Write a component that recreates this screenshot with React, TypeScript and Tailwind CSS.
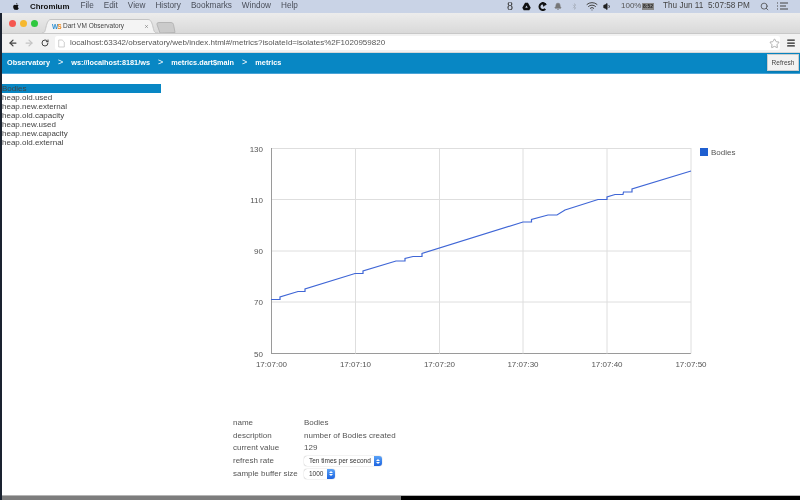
import { Bell, Bluetooth, Search, Star, Menu, Volume1, Wifi, X, ArrowLeft, ArrowRight, RotateCw } from "lucide-react";

const FONT = "font-['Liberation_Sans',Arial,sans-serif]";

const METRICS = ["Bodies", "heap.old.used", "heap.new.external", "heap.old.capacity", "heap.new.used", "heap.new.capacity", "heap.old.external"];
const MAC_MENU = ["File", "Edit", "View", "History", "Bookmarks", "Window", "Help"];
const CRUMBS = ["Observatory", "ws://localhost:8181/ws", "metrics.dart$main", "metrics"];

const LINE =
  "271,299.5 280,299.5 280,297 298,291.5 305,291.5 305,289 355,273.5 363,273.5 363,271 396,261 405,261 405,258.5 413,256.5 422,256.5 422,253.5 523,222 531.5,222 531.5,219.5 548,215 557,215 565,210 598,199.5 607,199.5 607,197 615,194.5 623,194.5 623.5,192 632,192 632,189 691,171";

const Y_TICKS = [
  { label: "130", y: 148.5 },
  { label: "110", y: 199.5 },
  { label: "90", y: 251 },
  { label: "70", y: 302 },
  { label: "50", y: 353.5 },
];
const X_TICKS = [
  { label: "17:07:00", x: 271.5 },
  { label: "17:07:10", x: 355.5 },
  { label: "17:07:20", x: 439.5 },
  { label: "17:07:30", x: 523 },
  { label: "17:07:40", x: 607 },
  { label: "17:07:50", x: 691 },
];

function MenuBar() {
  return (
    <div className="h-[13px] bg-[#c9d3e6] flex items-center text-[8.2px] text-[#4a4f5a] pl-[12px] pr-[12px] shrink-0">
      <svg viewBox="0 0 24 24" className="w-[8px] h-[9px] mr-[10px] fill-[#111]">
        <path d="M17.5 12.6c0-2.6 2.1-3.8 2.2-3.9-1.2-1.8-3.1-2-3.7-2-1.6-.2-3.1.9-3.9.9s-2.1-.9-3.4-.9c-1.7 0-3.4 1-4.3 2.6-1.8 3.2-.5 7.9 1.3 10.5.9 1.3 1.9 2.7 3.3 2.6 1.3-.1 1.8-.8 3.4-.8s2 .8 3.4.8 2.3-1.3 3.2-2.6c1-1.5 1.4-2.9 1.4-3-.1 0-2.9-1.1-2.9-4.2zM14.9 4.8c.7-.9 1.2-2.1 1.1-3.3-1 0-2.3.7-3 1.6-.7.8-1.2 2-1.1 3.2 1.2.1 2.3-.6 3-1.5z" />
      </svg>
      <span className="font-bold text-[7.9px] text-[#111] w-[50.5px]">Chromium</span>
      <div className="flex gap-[10px]">
        {MAC_MENU.map((m) => (
          <span key={m}>{m}</span>
        ))}
      </div>
      <div className="ml-auto flex items-center text-[#444]">
        <span className="font-['Liberation_Serif',serif] text-[12px] w-[7px] leading-none text-[#333]">8</span>
        <svg viewBox="0 0 16 16" className="w-[9px] h-[9px] ml-[8px] fill-[#111]">
          <path d="M5.5 1.5h5L15.5 10l-2.5 4.5h-10L.5 10z" />
          <path d="M8 6L5.8 10h4.4z" fill="#c9d3e6" />
        </svg>
        <svg viewBox="0 0 16 16" className="w-[9px] h-[9px] ml-[7px] fill-none stroke-[#111] stroke-[3.5]">
          <path d="M14 5.5a6 6 0 1 0-1 7" />
          <path d="M9 2l3 1.5-1.5 2z" />
        </svg>
        <Bell className="w-[8px] h-[9px] ml-[7px] fill-[#777] text-[#777]" />
        <Bluetooth className="w-[7px] h-[9px] ml-[9px] text-[#a4aab6]" />
        <Wifi className="w-[12px] h-[12px] -my-[1px] ml-[8px] text-[#444]" />
        <Volume1 className="w-[9px] h-[9px] ml-[5px] fill-[#222] text-[#222]" />
        <span className="ml-[9px] w-[18px] text-[8px] text-[#555]">100%</span>
        <span className="ml-[3px] w-[12px] h-[7px] bg-[#888] text-[5px] leading-[7px] text-center text-[#222] font-bold">8:52</span>
        <span className="ml-[9px] w-[40px] whitespace-nowrap">Thu Jun 11</span>
        <span className="ml-[5px] w-[41px] whitespace-nowrap">5:07:58 PM</span>
        <Search className="w-[9px] h-[9px] ml-[11px] text-[#444]" />
        <svg viewBox="0 0 11 8" className="w-[11px] h-[8px] ml-[8px] stroke-[#444]">
          <path d="M0 1h1M3 1h8M0 4h1M3 4h6M0 7h1M3 7h8" />
        </svg>
      </div>
    </div>
  );
}

function BrowserChrome() {
  return (
    <div className="shrink-0">
      <div className="h-[20px] bg-gradient-to-b from-[#ececec] to-[#d9d9d9] flex items-end pl-[7px]">
        <div className="flex gap-[4px] self-center w-[33px]">
          <span className="w-[7px] h-[7px] shrink-0 rounded-full bg-[#f5564f]" />
          <span className="w-[7px] h-[7px] shrink-0 rounded-full bg-[#f6b82e]" />
          <span className="w-[7px] h-[7px] shrink-0 rounded-full bg-[#2fc83f]" />
        </div>
        <div className="relative w-[116px] h-[14px] flex items-center text-[#444] pl-[10px] pr-[9px]">
          <svg viewBox="0 0 116 14" className="absolute inset-0 w-[116px] h-[14px] fill-[#f4f4f4] stroke-[#c4c4c4]">
            <path d="M0 14c3 0 3-2 4-6s2-7.500 5-7.500h97c3 0 4 3.500 5 7.500s1 6 5 6" />
          </svg>
          <span className="relative w-[9px] text-[6.5px] leading-[7px] font-bold whitespace-nowrap tracking-[-1px]">
            <span className="text-[#2d8fd0]">W</span>
            <span className="text-[#ee8a22]">S</span>
          </span>
          <span className="relative ml-[2px] text-[6.5px]">Dart VM Observatory</span>
          <X className="relative w-[5px] h-[5px] ml-auto text-[#555]" />
        </div>
        <svg viewBox="0 0 20 11" className="w-[20px] h-[11px] -ml-[2px] fill-[#cbcbcb] stroke-[#b5b5b5]">
          <path d="M4 11L1 2.500Q.5.500 3 .500h12q2 0 2.500 2L19 10.500z" />
        </svg>
      </div>
      <div className="h-[19px] bg-[#f2f2f2] border-t border-[#c8c8c8] flex items-center pl-[6px] pr-[4px]">
        <ArrowLeft className="w-[10px] h-[10px] text-[#444] stroke-[3]" />
        <ArrowRight className="w-[10px] h-[10px] text-[#c4c4c4] ml-[6px] stroke-[3]" />
        <RotateCw className="w-[8px] h-[8px] text-[#444] ml-[7px] stroke-[3]" />
        <div className="ml-[6px] w-[725px] h-[14px] bg-white flex items-center rounded-[2px] text-[8px] text-[#555] pl-[3px]">
          <svg viewBox="0 0 10 12" className="w-[7px] h-[9px] mr-[5px] fill-white stroke-[#bbb]">
            <path d="M1 1h5l3 3v7H1z" />
          </svg>
          <span>localhost:63342/observatory/web/index.html#/metrics?isolateId=isolates%2F1020959820</span>
          <Star className="w-[11px] h-[11px] ml-auto text-[#aaa]" />
        </div>
        <Menu className="w-[10px] h-[10px] ml-[6px] text-[#222] stroke-[3]" />
      </div>
      <div className="h-px bg-[#d8d8d8]" />
    </div>
  );
}

function Chart() {
  return (
    <svg viewBox="0 0 800 310" width={800} height={310} className="block">
      <g transform="translate(0 -130)">
        {Y_TICKS.map((t) => (
          <g key={t.label}>
            <line x1={271} x2={691} y1={t.y} y2={t.y} stroke={t.y > 350 ? "#9a9a9a" : "#dedede"} strokeWidth={1} />
            <text x={263} y={t.y + 3} textAnchor="end" fontSize={8} fill="#555">
              {t.label}
            </text>
          </g>
        ))}
        {X_TICKS.map((t, i) => (
          <g key={t.label}>
            <line x1={t.x} x2={t.x} y1={148} y2={353.5} stroke={i === 0 ? "#9a9a9a" : "#dedede"} strokeWidth={1} />
            <text x={t.x} y={366.5} textAnchor="middle" fontSize={8} fill="#555">
              {t.label}
            </text>
          </g>
        ))}
        <polyline points={LINE} fill="none" stroke="#3f66d6" strokeWidth={1.2} />
        <rect x={700} y={148} width={8} height={8} fill="#1f5fd0" />
        <text x={711} y={155} fontSize={8} fill="#555">
          Bodies
        </text>
      </g>
    </svg>
  );
}

function Stepper() {
  return (
    <span className="w-[8px] shrink-0 self-stretch bg-gradient-to-b from-[#5aa2f7] to-[#1d63e0] rounded-r-[3px] flex flex-col items-center justify-center gap-[1px]">
      <span className="w-0 h-0 border-x-[2px] border-x-transparent border-b-[2px] border-b-white" />
      <span className="w-0 h-0 border-x-[2px] border-x-transparent border-t-[2px] border-t-white" />
    </span>
  );
}

function Select({ value, width }: { value: string; width: string }) {
  return (
    <div className={`h-[10px] ${width} bg-white rounded-[3px] shadow-[0_0_1px_#888] flex items-center text-[6.5px] text-[#333] pl-[5px]`}>
      <span className="flex-1 whitespace-nowrap">{value}</span>
      <Stepper />
    </div>
  );
}

export default function App() {
  return (
    <div className={`w-[800px] h-[500px] overflow-hidden flex flex-col bg-white blur-[0.4px] ${FONT}`}>
      <MenuBar />
      <div className="flex-1 flex flex-col border-l-2 border-[#1a2230] min-h-0">
        <BrowserChrome />
        <nav className="h-[21px] shrink-0 bg-[#0887c4] border-b border-[#4aa3d6] flex items-center pl-[5px] text-[7.3px] font-bold text-white relative">
          {CRUMBS.map((c, i) => (
            <span key={c} className="flex">
              {i > 0 && <span className="mx-[8px] text-[9px] leading-[9px] font-normal">&gt;</span>}
              {c}
            </span>
          ))}
          <button className="absolute right-[1px] top-[1px] w-[32px] h-[17px] bg-[#f2f2f2] border border-[#ccc] text-[6.5px] font-normal text-[#444] shadow-sm">
            Refresh
          </button>
        </nav>
        <div className="flex-1 min-h-0 flex flex-col overflow-hidden">
          <ul className="w-[159px] pt-[10px] text-[8px] leading-[9px] text-[#444] shrink-0">
            {METRICS.map((m, i) => (
              <li key={m} className={i === 0 ? "bg-[#0887c4] h-[9px]" : "h-[9px]"}>
                {m}
              </li>
            ))}
          </ul>
          <div className="-ml-[2px] -mt-[17px] shrink-0 h-[287px] overflow-hidden">
            <Chart />
          </div>
          <div className="ml-[231px] grid grid-cols-[71px_1fr] auto-rows-[12.6px] items-center text-[8px] text-[#555]">
            <span>name</span>
            <span>Bodies</span>
            <span>description</span>
            <span>number of Bodies created</span>
            <span>current value</span>
            <span>129</span>
            <span>refresh rate</span>
            <Select value="Ten times per second" width="w-[78px]" />
            <span>sample buffer size</span>
            <Select value="1000" width="w-[31px]" />
          </div>
        </div>
        <div className="h-[5px] shrink-0 flex border-t border-[#b5b5b5]">
          <div className="w-[399px] bg-[#7d7d7d]" />
          <div className="flex-1 bg-black" />
        </div>
      </div>
    </div>
  );
}
